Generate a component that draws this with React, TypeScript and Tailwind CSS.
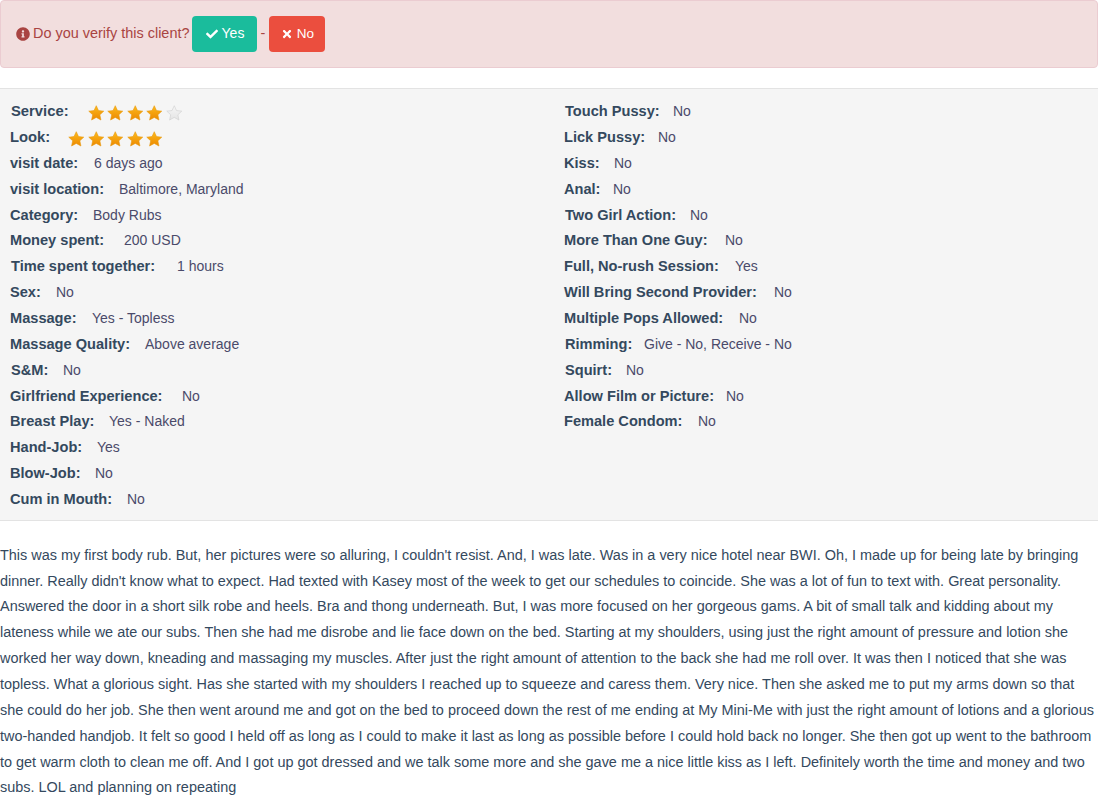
import { FaCheck, FaTimes, FaInfoCircle } from "react-icons/fa";

const leftRows = [
  { label: "visit date:", value: "6 days ago", w: "w-[84px]" },
  { label: "visit location:", value: "Baltimore, Maryland", w: "w-[109px]" },
  { label: "Category:", value: "Body Rubs", w: "w-[83px]" },
  { label: "Money spent:", value: "200 USD", w: "w-[114px]" },
  { label: "Time spent together:", value: "1 hours", w: "w-[166px]", shift: true },
  { label: "Sex:", value: "No", w: "w-[46px]" },
  { label: "Massage:", value: "Yes - Topless", w: "w-[82px]" },
  { label: "Massage Quality:", value: "Above average", w: "w-[135px]" },
  { label: "S&M:", value: "No", w: "w-[52px]", shift: true },
  { label: "Girlfriend Experience:", value: "No", w: "w-[172px]" },
  { label: "Breast Play:", value: "Yes - Naked", w: "w-[99px]" },
  { label: "Hand-Job:", value: "Yes", w: "w-[87px]" },
  { label: "Blow-Job:", value: "No", w: "w-[85px]" },
  { label: "Cum in Mouth:", value: "No", w: "w-[117px]" },
];

const rightRows = [
  { label: "Touch Pussy:", value: "No", w: "w-[108px]", shift: true },
  { label: "Lick Pussy:", value: "No", w: "w-[94px]" },
  { label: "Kiss:", value: "No", w: "w-[50px]" },
  { label: "Anal:", value: "No", w: "w-[49px]" },
  { label: "Two Girl Action:", value: "No", w: "w-[125px]", shift: true },
  { label: "More Than One Guy:", value: "No", w: "w-[161px]" },
  { label: "Full, No-rush Session:", value: "Yes", w: "w-[171px]" },
  { label: "Will Bring Second Provider:", value: "No", w: "w-[210px]" },
  { label: "Multiple Pops Allowed:", value: "No", w: "w-[175px]" },
  { label: "Rimming:", value: "Give - No, Receive - No", w: "w-[79px]", shift: true },
  { label: "Squirt:", value: "No", w: "w-[61px]", shift: true },
  { label: "Allow Film or Picture:", value: "No", w: "w-[162px]" },
  { label: "Female Condom:", value: "No", w: "w-[134px]" },
];

const reviewLines = [
  "This was my first body rub. But, her pictures were so alluring, I couldn't resist. And, I was late. Was in a very nice hotel near BWI. Oh, I made up for being late by bringing",
  "dinner. Really didn't know what to expect. Had texted with Kasey most of the week to get our schedules to coincide. She was a lot of fun to text with. Great personality.",
  "Answered the door in a short silk robe and heels. Bra and thong underneath. But, I was more focused on her gorgeous gams. A bit of small talk and kidding about my",
  "lateness while we ate our subs. Then she had me disrobe and lie face down on the bed. Starting at my shoulders, using just the right amount of pressure and lotion she",
  "worked her way down, kneading and massaging my muscles. After just the right amount of attention to the back she had me roll over. It was then I noticed that she was",
  "topless. What a glorious sight. Has she started with my shoulders I reached up to squeeze and caress them. Very nice. Then she asked me to put my arms down so that",
  "she could do her job. She then went around me and got on the bed to proceed down the rest of me ending at My Mini-Me with just the right amount of lotions and a glorious",
  "two-handed handjob. It felt so good I held off as long as I could to make it last as long as possible before I could hold back no longer. She then got up went to the bathroom",
  "to get warm cloth to clean me off. And I got up got dressed and we talk some more and she gave me a nice little kiss as I left. Definitely worth the time and money and two",
  "subs. LOL and planning on repeating",
];

function Star({ on, id }: { on: boolean; id: string }) {
  return (
    <svg viewBox="0 0 20 18" className="mt-0.5 h-[18px] w-[19.5px] shrink-0">
      <defs>
        <linearGradient id={id} x1="0" y1="0" x2="0" y2="1">
          <stop offset="0" stopColor={on ? "#fdbb1c" : "#f6f6f6"} />
          <stop offset="1" stopColor={on ? "#ec8800" : "#e4e4e4"} />
        </linearGradient>
      </defs>
      <path
        d="M9.5 1.5l2.3 5 5.4.6-4 3.7 1.1 5.4-4.8-2.7-4.8 2.7 1.1-5.4-4-3.7 5.4-.6z"
        fill={`url(#${id})`}
        stroke={on ? "#e79a10" : "#cdcdcd"}
        strokeWidth="0.6"
      />
    </svg>
  );
}

function Stars({ name, count }: { name: string; count: number }) {
  return (
    <span className="flex">
      {[0, 1, 2, 3, 4].map((i) => (
        <Star key={i} id={`${name}-${i}`} on={i < count} />
      ))}
    </span>
  );
}

function Row({ label, value, w, shift }: { label: string; value: string; w: string; shift?: boolean }) {
  return (
    <div className={shift ? "flex h-[25.85px] items-center pl-px" : "flex h-[25.85px] items-center"}>
      <b className={`${w} text-[14.6px] whitespace-nowrap text-[#34495e]`}>{label}</b>
      <span className="text-[14px] text-[#4a4a6a]">{value}</span>
    </div>
  );
}

export default function App() {
  return (
    <div className="min-h-[809px] bg-white font-['Liberation_Sans',Arial,sans-serif] text-[14.44px] leading-[25.85px] text-[#34495e]">
      <div className="mb-5 flex h-[68px] items-center rounded border border-[#ebccd1] bg-[#f2dede] px-[15px] text-[#a94442]">
        <FaInfoCircle className="mr-[3px] text-[14px]" />
        <span>Do you verify this client?</span>
        <button className="ml-[3px] flex h-9 w-[65px] items-center justify-center gap-1 rounded bg-[#1abc9c] text-[14px] text-white">
          <FaCheck className="text-[12px]" /> Yes
        </button>
        <span className="mx-[3px] w-1.5">-</span>
        <button className="flex h-9 w-14 items-center justify-center gap-1 rounded bg-[#eb4e3e] text-[13.5px] text-white">
          <FaTimes className="text-[12px]" /> No
        </button>
      </div>

      <div className="grid h-[433px] grid-cols-2 border-y border-[#e3e3e3] bg-[#f5f5f5] pt-[10.25px] pl-2.5">
        <div>
          <div className="flex h-[25.85px] items-center pl-px">
            <b className="mr-[18px] text-[14.8px]">Service:</b>
            <Stars name="service" count={4} />
          </div>
          <div className="flex h-[25.85px] items-center">
            <b className="mr-[17px] text-[14.8px]">Look:</b>
            <Stars name="look" count={5} />
          </div>
          {leftRows.map((row) => (
            <Row key={row.label} {...row} />
          ))}
        </div>
        <div className="pl-2.5">
          {rightRows.map((row) => (
            <Row key={row.label} {...row} />
          ))}
        </div>
      </div>

      <div className="mt-[21.8px]">
        {reviewLines.map((line) => (
          <p key={line} className="whitespace-nowrap">
            {line}
          </p>
        ))}
      </div>
    </div>
  );
}
